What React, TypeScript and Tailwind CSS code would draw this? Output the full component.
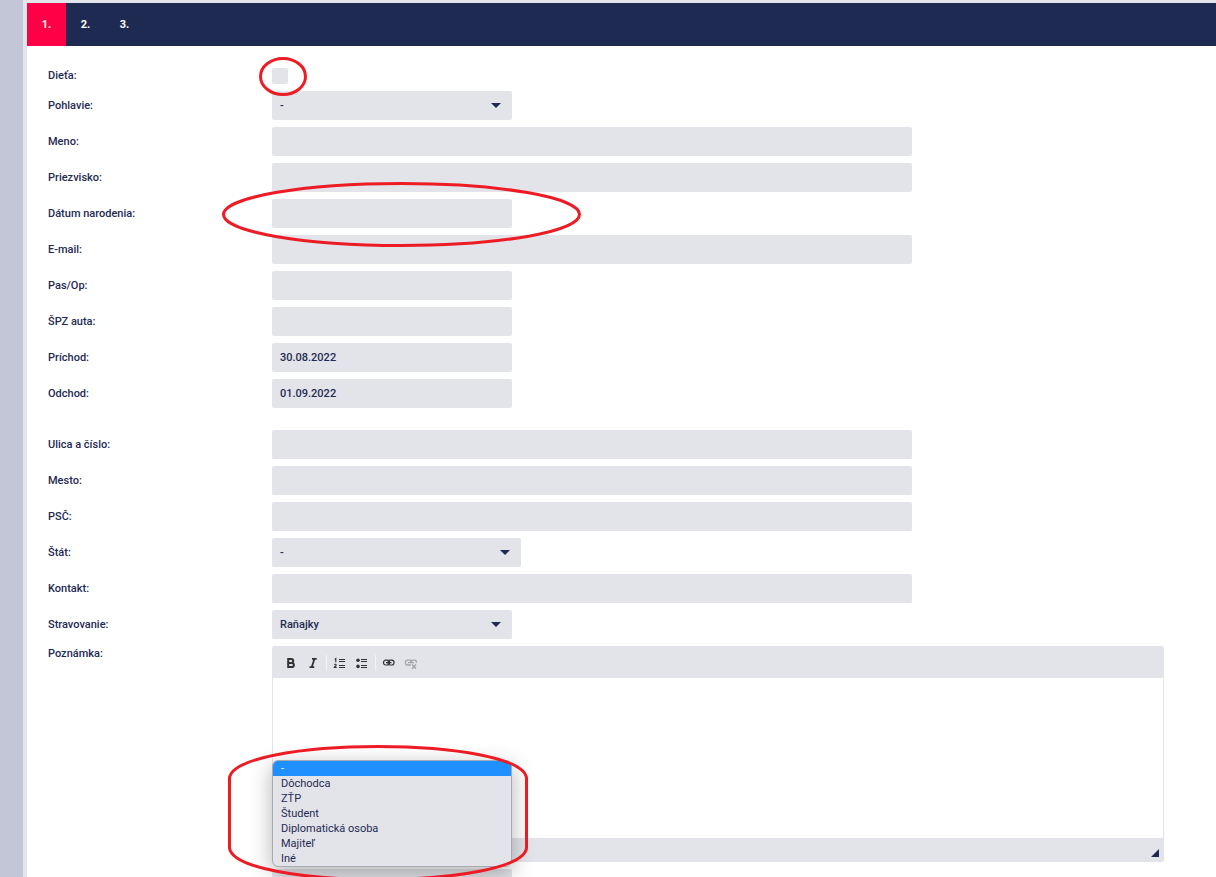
import { useState } from 'react';
import type { ReactNode } from 'react';
import clsx from 'clsx';

interface RowProps {
  id: string;
  label: string;
  children: ReactNode;
}

const GUEST_TYPES = ['-', 'Dôchodca', 'ZŤP', 'Študent', 'Diplomatická osoba', 'Majiteľ', 'Iné'];

function Row({ id, label, children }: RowProps) {
  return (
    <div className="flex items-center">
      <label htmlFor={id} className="w-56 shrink-0">
        {label}
      </label>
      {children}
    </div>
  );
}

function TextRow({ id, label, short, value }: { id: string; label: string; short?: boolean; value?: string }) {
  return (
    <Row id={id} label={label}>
      <input
        id={id}
        type="text"
        defaultValue={value}
        className={clsx('h-[29px] rounded-xs bg-[#e3e4e9] px-2 outline-none', short ? 'w-60' : 'w-160')}
      />
    </Row>
  );
}

function SelectBox({ id, options, wide }: { id: string; options: string[]; wide?: boolean }) {
  return (
    <div className={clsx('relative', wide ? 'w-[249px]' : 'w-60')}>
      <select id={id} className="block h-[29px] w-full appearance-none rounded-xs bg-[#e3e4e9] px-2 outline-none">
        {options.map((o) => (
          <option key={o}>{o}</option>
        ))}
      </select>
      <svg className="pointer-events-none absolute top-3 right-[11px]" width="10" height="5" viewBox="0 0 10 5">
        <path d="M0 0h10L5 5z" fill="#1e2a52" />
      </svg>
    </div>
  );
}

function ToolButton({ label, disabled, children }: { label: string; disabled?: boolean; children: ReactNode }) {
  return (
    <button
      type="button"
      aria-label={label}
      disabled={disabled}
      className="flex h-6 w-[22px] items-center justify-center text-[#333333] disabled:opacity-35"
    >
      <svg width="16" height="16" viewBox="0 0 16 16" fill="none" stroke="currentColor">
        {children}
      </svg>
    </button>
  );
}

function Separator() {
  return <span className="mx-0.5 h-4 w-px bg-[#f3f3f5]" />;
}

function Editor() {
  return (
    <div className="flex min-w-0 flex-1 flex-col overflow-hidden rounded-xs border border-[#e3e4e9]">
      <div className="flex h-[31px] items-center bg-[#e3e4e9] pl-[7px]">
        <ToolButton label="Tučné">
          <path d="M5.2 4h3.1a1.9 1.9 0 0 1 0 3.900H5.2zM5.2 7.900h3.6a2.100 2.100 0 0 1 0 4.200H5.2z" strokeWidth="2" />
        </ToolButton>
        <ToolButton label="Kurzíva">
          <path d="M7 3.800h4.700M4.500 12.200h4.700M9.400 4L6.800 12" strokeWidth="1.800" />
        </ToolButton>
        <Separator />
        <ToolButton label="Číslovaný zoznam">
          <path d="M7 4.500h6M7 6.500h6M7 10.500h6M7 12.500h6" strokeWidth="1" />
          <path d="M2.600 4.400l1.200-.8v3.600M2.300 9.700c.8-.9 2.200-.4 1.800.6-.3.7-1.500 1.300-1.800 2.100h2.400" strokeWidth="1.100" />
        </ToolButton>
        <ToolButton label="Zoznam s odrážkami">
          <path d="M7 4.500h6M7 6.500h6M7 10.500h6M7 12.500h6" strokeWidth="1" />
          <circle cx="4" cy="5.300" r="1.800" fill="currentColor" stroke="none" />
          <circle cx="4" cy="11.400" r="1.800" fill="currentColor" stroke="none" />
        </ToolButton>
        <Separator />
        <ToolButton label="Odkaz">
          <rect x="2.500" y="5.200" width="6" height="4.800" rx="2.200" strokeWidth="1.200" />
          <rect x="7" y="5.200" width="6" height="4.800" rx="2.200" strokeWidth="1.200" />
          <path d="M5 7.600h5.500" strokeWidth="1.200" />
        </ToolButton>
        <ToolButton label="Odstrániť odkaz" disabled>
          <path d="M8 9.500c-.4.4-.9.5-1.400.5H4.500c-1.200 0-2-.8-2-2v-.8c0-1.200.8-2 2-2h2.100c1.200 0 2 .7 2 1.800" strokeWidth="1.300" />
          <path d="M7.500 7c.2-1.100.9-1.800 2-1.800h1.900c1.200 0 2 .8 2 2v.6M5 7.600h6" strokeWidth="1.300" />
          <path d="M9 9.500l4 4.200M13 9.500l-4 4.200" strokeWidth="1.400" />
        </ToolButton>
      </div>
      <textarea id="note" className="block h-40 resize-none bg-white p-5 outline-none" />
      <div className="flex h-[23px] items-center justify-end bg-[#e3e4e9] pt-1.5 pr-1">
        <svg width="8" height="8" viewBox="0 0 8 8">
          <path d="M8 0v8H0z" fill="#1e2a52" />
        </svg>
      </div>
    </div>
  );
}

function GuestTypeSelect() {
  const [selected, setSelected] = useState(GUEST_TYPES[0]);

  return (
    <div className="relative w-60">
      <button
        type="button"
        aria-haspopup="listbox"
        aria-label="Typ hosťa"
        className="block h-[29px] w-full rounded-xs bg-[#e3e4e9]"
      />
      <ul
        role="listbox"
        aria-label="Typ hosťa"
        className="absolute bottom-full left-0 mb-0.5 w-full overflow-hidden rounded-md border border-[#a9abb3] bg-[#e3e4e9] leading-[15px] font-normal shadow-[0_6px_22px_rgba(0,0,0,0.3)]"
      >
        {GUEST_TYPES.map((type) => (
          <li
            key={type}
            role="option"
            aria-selected={type === selected}
            onClick={() => setSelected(type)}
            className={clsx('h-[15px] px-2', type === selected && 'bg-[#1e90ff] text-white')}
          >
            {type}
          </li>
        ))}
      </ul>
      <svg
        className="pointer-events-none absolute -top-[125px] -left-11 max-w-none"
        width="300"
        height="138"
        viewBox="0 0 300 138"
        fill="none"
        stroke="#ed1c24"
        strokeWidth="3"
      >
        <path d="M1.500 34C4 14 75 2.500 150 2.500S296 14 298.500 34V104C296 124 225 135.500 150 135.500S4 124 1.500 104Z" />
      </svg>
    </div>
  );
}

export default function App() {
  const [step, setStep] = useState(1);

  return (
    <div className="flex h-screen overflow-hidden bg-[#e2e5ea] font-['Roboto','Noto_Sans',sans-serif] text-[11px] leading-4 font-medium text-[#1e2a52]">
      <aside className="w-[23px] shrink-0 bg-[#c3c6d6]" />
      <main className="mt-[3px] ml-1 min-w-0 flex-1 bg-white">
        <nav className="flex h-[43px] bg-[#1e2a52] font-bold text-white">
          {[1, 2, 3].map((n) => (
            <button
              key={n}
              type="button"
              onClick={() => setStep(n)}
              className={clsx('w-[39px]', n === step && 'bg-[#ff0046]')}
            >
              {n}.
            </button>
          ))}
        </nav>

        <form className="flex flex-col gap-[7px] pt-[22px] pr-[52px] pl-[21px]">
          <Row id="child" label="Dieťa:">
            <div className="relative h-4 w-4">
              <input id="child" type="checkbox" className="block h-4 w-4 appearance-none rounded-xs bg-[#e3e4e9]" />
              <svg
                className="pointer-events-none absolute -top-[11px] -left-[13px] z-10 max-w-none"
                width="48"
                height="39"
                viewBox="0 0 48 39"
              >
                <ellipse cx="24" cy="19.500" rx="22.500" ry="18" fill="none" stroke="#ed1c24" strokeWidth="3" />
              </svg>
            </div>
          </Row>
          <Row id="sex" label="Pohlavie:">
            <SelectBox id="sex" options={['-', 'Muž', 'Žena']} />
          </Row>
          <TextRow id="first-name" label="Meno:" />
          <TextRow id="last-name" label="Priezvisko:" />
          <Row id="birth" label="Dátum narodenia:">
            <div className="relative">
              <input id="birth" type="text" className="block h-[29px] w-60 rounded-xs bg-[#e3e4e9] px-2 outline-none" />
              <svg
                className="pointer-events-none absolute -top-[17px] -left-[50px] z-10 max-w-none"
                width="359"
                height="65"
                viewBox="0 0 359 65"
              >
                <ellipse cx="179.500" cy="32.500" rx="178" ry="31" fill="none" stroke="#ed1c24" strokeWidth="3" />
              </svg>
            </div>
          </Row>
          <TextRow id="email" label="E-mail:" />
          <TextRow id="passport" label="Pas/Op:" short />
          <TextRow id="plate" label="ŠPZ auta:" short />
          <TextRow id="arrival" label="Príchod:" value="30.08.2022" short />
          <TextRow id="departure" label="Odchod:" value="01.09.2022" short />

          <div className="mt-[15px] flex flex-col gap-[7px]">
            <TextRow id="street" label="Ulica a číslo:" />
            <TextRow id="city" label="Mesto:" />
            <TextRow id="zip" label="PSČ:" />
            <Row id="country" label="Štát:">
              <SelectBox id="country" options={['-', 'Slovensko', 'Česko']} wide />
            </Row>
            <TextRow id="contact" label="Kontakt:" />
            <Row id="meals" label="Stravovanie:">
              <SelectBox id="meals" options={['Raňajky', 'Polpenzia', 'Plná penzia']} />
            </Row>
            <div className="flex items-start">
              <label htmlFor="note" className="w-56 shrink-0">
                Poznámka:
              </label>
              <Editor />
            </div>
            <div className="ml-56">
              <GuestTypeSelect />
            </div>
          </div>
        </form>
      </main>
    </div>
  );
}
